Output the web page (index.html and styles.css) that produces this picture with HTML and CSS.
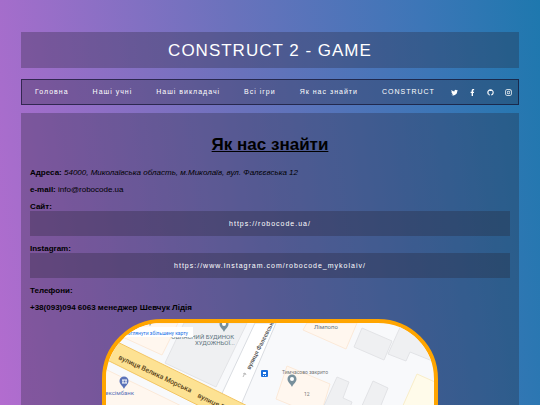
FILE: index.html
```html
<!DOCTYPE html>
<html lang="uk">
<head>
    <meta charset="UTF-8">
    <meta name="viewport" content="width=device-width, initial-scale=1.0">
    <title>Construct 2 - Game</title>
    <link rel="stylesheet" href="styles.css">
</head>
<body>

    <header class="header">CONSTRUCT 2 - GAME</header>

    <nav class="nav">
        <div class="menu">
            <a href="#">Головна</a>
            <a href="#">Наші учні</a>
            <a href="#">Наші викладачі</a>
            <a href="#">Всі ігри</a>
            <a href="#">Як нас знайти</a>
            <a href="#">CONSTRUCT</a>
        </div>
        <div class="social">
            <a href="#" aria-label="Twitter">
                <svg viewBox="0 0 24 24"><path d="M23.6 4.9c-.9.4-1.8.6-2.7.8 1-.6 1.700-1.500 2.100-2.600-.9.5-1.900.9-3 1.100A4.800 4.800 0 0 0 11.800 8.600C7.900 8.400 4.300 6.500 1.900 3.600c-1.300 2.200-.6 5 1.500 6.400-.8 0-1.500-.2-2.200-.6 0 2.300 1.600 4.300 3.900 4.800-.7.2-1.400.2-2.200.1.600 1.900 2.400 3.300 4.500 3.300A9.700 9.700 0 0 1 .4 19.600 13.700 13.700 0 0 0 21.400 7.400c.9-.7 1.600-1.500 2.200-2.500z"/></svg>
            </a>
            <a href="#" aria-label="Facebook">
                <svg viewBox="0 0 24 24"><path d="M9 24V13.500H5.500V9H9V6.500C9 2.500 11.200.3 14.800.3c1.500 0 2.900.2 2.900.2v3.900h-1.900c-1.700 0-2.100.9-2.100 2V9h3.900l-.7 4.500h-3.200V24z"/></svg>
            </a>
            <a href="#" aria-label="GitHub">
                <svg viewBox="0 0 24 24"><path d="M12 1C5.700 1 1 5.800 1 12c0 5 3.200 9 7.600 10.500.6.1.8-.2.800-.5v-2.500c-3.100.6-3.900-.8-4.100-1.500-.3-.7-1-1.300-.3-1.400.8 0 1.500.8 1.800 1.200.8 1.300 2 1 2.700.7.100-.6.300-1.100.600-1.300-2.500-.3-5-1.300-5-5.500 0-1.200.4-2.200 1.100-3-.1-.3-.5-1.400.1-2.900 0 0 1-.3 3.100 1.100a10 10 0 0 1 5.600 0c2.100-1.400 3.100-1.100 3.100-1.100.6 1.500.2 2.600.1 2.900.7.8 1.100 1.800 1.100 3 0 4.200-2.600 5.200-5 5.500.4.300.7 1 .7 2V22c0 .3.200.6.8.5C19.900 21 23 17 23 12 23 5.800 18.300 1 12 1z"/></svg>
            </a>
            <a href="#" aria-label="Instagram">
                <svg viewBox="0 0 24 24"><path fill-rule="evenodd" d="M7 1h10a6 6 0 0 1 6 6v10a6 6 0 0 1-6 6H7a6 6 0 0 1-6-6V7a6 6 0 0 1 6-6zm0 2.500A3.500 3.500 0 0 0 3.500 7v10A3.500 3.500 0 0 0 7 20.500h10a3.500 3.500 0 0 0 3.500-3.500V7A3.500 3.500 0 0 0 17 3.500zM12 6.300a5.700 5.700 0 1 1 0 11.400 5.700 5.700 0 0 1 0-11.400zm0 2.200a3.500 3.500 0 1 0 0 7 3.500 3.500 0 0 0 0-7z"/><circle cx="17.800" cy="6.200" r="1.500"/></svg>
            </a>
        </div>
    </nav>

    <main class="content">
        <h1>Як нас знайти</h1>
        <p><b>Адреса:</b> <i>54000, Миколаївська область, м.Миколаїв, вул. Фалєєвська 12</i></p>
        <p><b>e-mail:</b> info@robocode.ua</p>
        <p><b>Сайт:</b></p>
        <a class="link" href="https://robocode.ua/">https://robocode.ua/</a>
        <p><b>Instagram:</b></p>
        <a class="link" href="https://www.instagram.com/robocode_mykolaiv/">https://www.instagram.com/robocode_mykolaiv/</a>
        <p><b>Телефони:</b></p>
        <p><b>+38(093)094 6063 менеджер Шевчук Лідія</b></p>

        <div class="map">
            <svg viewBox="105 323 330 240" preserveAspectRatio="xMidYMin slice">
                <defs>
                    <path id="pin" d="M0 7C-1 4-4.500 2.500-4.500-1a4.500 4.500 0 0 1 9 0C4.500 2.500 1 4 0 7z"/>
                </defs>

                <!-- blocks and buildings -->
                <path class="block" d="M184 323 165 363 216 387 247 323z"/>
                <path class="house" d="M105 323H178L162 355 105 329z"/>
                <path class="house" d="M105 369 165 398 210 420V563H105z"/>
                <path class="house" d="M307 323 303 330 346 349 357 323z"/>
                <path class="house" d="M287 366 330 384 320 417 276 399z"/>
                <path class="block" d="M362 328 392 341 384 360 354 347z"/>
                <path class="block" d="M402 323 388 354 406 361 410 352 435 362V323z"/>
                <path class="block" d="M337 377 349 382 343 398 352 402 346 418 322 410z"/>
                <path class="block" d="M373 381 388 388 377 415 361 408z"/>
                <path class="shop" d="M417 374 435 382V420L401 410z"/>

                <!-- roads -->
                <path class="street" d="M255 323 218 402 238 412 276 323z"/>
                <path class="avenue" d="M95 331 280 422V446L95 354z"/>

                <text class="road" transform="translate(118 359) rotate(25)">вулиця Велика Морська</text>
                <text class="road" transform="translate(197 397) rotate(26)">вулиця Велика Морська</text>
                <text class="road side" transform="translate(250 370) rotate(-63)">вулиця Фалєєвська</text>
                <path class="arrow" d="M243 377 245 373M243 374 245 373 246 375"/>

                <!-- places -->
                <use href="#pin" x="150" y="319" class="pin"/>
                <use href="#pin" x="224" y="325" class="pin"/>
                <circle cx="224" cy="324" r="2" fill="#fff"/>
                <text class="place" x="234" y="339" text-anchor="end">ОБЛАСНИЙ БУДИНОК</text>
                <text class="place" x="195" y="345">ХУДОЖНЬОЇ...</text>
                <text class="place" x="314" y="329">Лімпопо</text>
                <use href="#pin" x="292" y="380" class="pin"/>
                <circle cx="292" cy="379" r="2" fill="#fff"/>
                <text class="note" x="282" y="374">Тимчасово закрито</text>
                <text class="note" x="304" y="396">12</text>
                <use href="#pin" x="124" y="382" class="pin bank"/>
                <path d="M122 380H127M122 383H127M123 380V383M126 380V383" stroke="#fff" fill="none"/>
                <text class="place bank" x="134" y="395" text-anchor="end">Укрексімбанк</text>
                <rect x="261" y="370" width="7" height="7" rx="1" fill="#1a6fdc"/>
                <path d="M263 372H266V374H263zM263 375H264V376H263zM265 375H266V376H265z" fill="#fff"/>

                <rect x="105" y="327" width="88" height="10" fill="#fff"/>
                <text class="more" x="188" y="335" text-anchor="end">Переглянути збільшену карту</text>
            </svg>
        </div>
    </main>

</body>
</html>
```
FILE: styles.css
```css
* {
    box-sizing: border-box;
}
body {
    font-family: "Liberation Sans", Arial, sans-serif;
    font-size: 8px;
    line-height: 9px;
    margin: 0;
    padding: 32px 21px;
    background: linear-gradient(82deg, #b36ccf 0%, #6a72bc 48%, #3c76b7 80%, #1e78ae 100%) fixed;
}
a {
    color: white;
    text-decoration: none;
}
.header {
    padding: 9px 8px 7px;
    background-color: rgba(38, 34, 50, 0.3);
    color: white;
    font-size: 17px;
    line-height: 20px;
    letter-spacing: 1px;
    text-align: center;
}
.nav {
    display: flex;
    align-items: center;
    justify-content: space-between;
    margin: 11px 0 8px;
    padding: 8px 6px 8px 13px;
    border: 1px solid rgba(20, 20, 50, 0.7);
    background-color: rgba(38, 34, 50, 0.3);
    font-size: 7px;
    line-height: 8px;
    letter-spacing: 1px;
    white-space: nowrap;
}
.menu {
    display: flex;
    gap: 24px;
}
.social {
    display: flex;
    gap: 11px;
}
.social svg {
    display: block;
    width: 7px;
    height: 7px;
    fill: white;
}
.content {
    padding: 22px 9px;
    background-color: rgba(38, 34, 50, 0.3);
}
h1 {
    margin: 0 0 13px;
    font-size: 17px;
    line-height: 20px;
    text-align: center;
    text-decoration: underline;
}
p {
    margin: 8px 0 0;
}
.link {
    display: block;
    padding: 8px;
    background-color: rgba(38, 34, 50, 0.3);
    font-size: 7px;
    letter-spacing: 1px;
    text-align: center;
}
.map {
    width: 70%;
    height: 248px;
    margin: 7px auto 0;
    border: 4px solid orange;
    border-radius: 60px;
    overflow: hidden;
    background-color: #f8f9fb;
}
.map svg {
    display: block;
    width: 100%;
    height: 100%;
}
.block {
    fill: #eff0f2;
    stroke: #e2e3e6;
}
.house {
    fill: #fff7ef;
    stroke: #fbe9d8;
}
.shop {
    fill: #fffbea;
    stroke: #f8eec8;
}
.street {
    fill: white;
    stroke: #d9dce1;
}
.avenue {
    fill: #fde293;
    stroke: #f3c563;
}
.road {
    font-family: Roboto, sans-serif;
    font-size: 7px;
    font-weight: 500;
    fill: #5c4620;
}
.road.side {
    font-size: 6px;
    fill: #555;
}
.arrow {
    fill: none;
    stroke: #bbb;
}
.pin {
    fill: #78909c;
}
.place {
    font-family: Roboto, sans-serif;
    font-size: 6px;
    fill: #607580;
}
.note {
    font-family: Roboto, sans-serif;
    font-size: 5px;
    fill: #777;
}
.bank {
    fill: #5a72b8;
}
.more {
    font-family: Roboto, sans-serif;
    font-size: 5px;
    fill: #1a73e8;
}
```
